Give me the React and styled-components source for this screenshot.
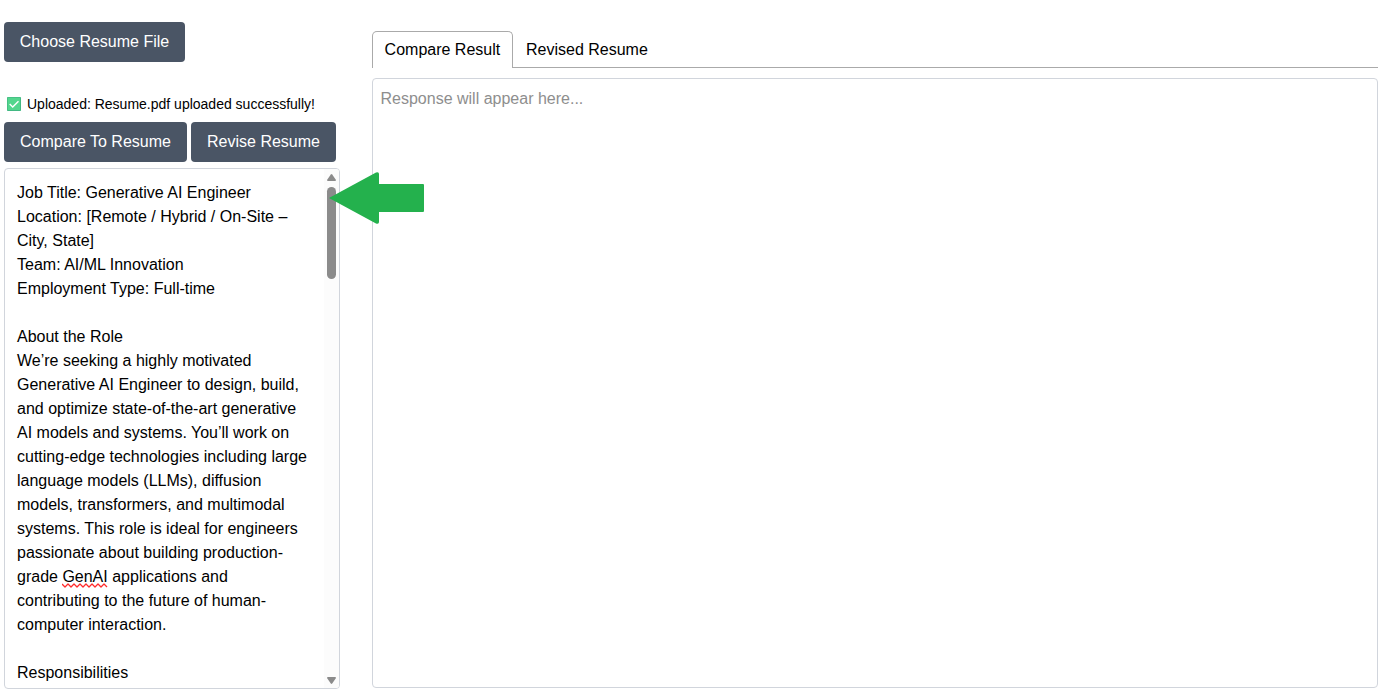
import React from 'react';
import styled, { createGlobalStyle } from 'styled-components';

const GlobalStyle = createGlobalStyle`
  *, *::before, *::after { box-sizing: border-box; }
  body {
    margin: 0;
    background: #fff;
    color: #000;
    font: 16px/24px "Liberation Sans", Arial, sans-serif;
    overflow: hidden;
  }
`;

const Page = styled.main`
  position: relative;
  display: flex;
  gap: 32px;
  height: 692px;
  padding: 0 8px 0 4px;
`;

const Sidebar = styled.section`
  display: flex;
  flex-direction: column;
  align-items: flex-start;
  width: 336px;
  flex: none;
  padding-top: 22px;
`;

const Button = styled.button`
  height: 40px;
  width: ${(p) => p.$width}px;
  padding: 0;
  border: 0;
  border-radius: 4px;
  background: #4a5565;
  color: #fff;
  font: inherit;
  white-space: nowrap;
`;

const Status = styled.p`
  display: flex;
  align-items: center;
  gap: 6px;
  height: 20px;
  margin: 32px 0 8px;
  padding-left: 3px;
  font-size: 14px;
  line-height: 20px;
  white-space: nowrap;
`;

const Actions = styled.div`
  display: flex;
  gap: 4px;
  margin-bottom: 6px;
`;

const Editor = styled.div`
  display: flex;
  width: 336px;
  height: 521px;
  border: 1px solid #d1d5dc;
  border-radius: 4px;
  overflow: hidden;
`;

const Description = styled.div`
  flex: 1;
  padding: 12px 0 0 12px;
  overflow: hidden;
`;

const Line = styled.div`
  display: flex;
  height: 24px;
  white-space: pre;
`;

const Misspelled = styled.span`
  position: relative;
  svg {
    position: absolute;
    left: 0;
    top: 18px;
  }
`;

const Scrollbar = styled.div`
  display: flex;
  flex-direction: column;
  align-items: center;
  width: 15px;
  padding: 5px 0 4px;
  background: #fcfcfc;
`;

const Thumb = styled.div`
  width: 9px;
  height: 92px;
  margin: 5px 0 auto;
  border-radius: 5px;
  background: #8b8b8b;
`;

const Results = styled.section`
  display: flex;
  flex-direction: column;
  flex: 1;
  padding-top: 31px;
`;

const TabList = styled.div`
  display: flex;
  height: 37px;
  margin-bottom: 10px;
`;

const Tab = styled.div`
  width: ${(p) => p.$width};
  padding: 6px 0 0 ${(p) => (p.$active ? 11.6 : 13)}px;
  white-space: nowrap;
  border: 1px solid ${(p) => (p.$active ? '#aaa' : 'transparent')};
  border-bottom-color: ${(p) => (p.$active ? 'transparent' : '#aaa')};
  border-left-width: ${(p) => (p.$active ? 1 : 0)}px;
  border-right-width: ${(p) => (p.$active ? 1 : 0)}px;
  ${(p) => p.$active && 'border-bottom-width: 0; border-radius: 5px 5px 0 0;'}
`;

const Response = styled.div`
  height: 610px;
  padding: 8px 8px 8px 7.5px;
  border: 1px solid #d1d5dc;
  border-radius: 4px;
  color: #8e8e8e;
`;

const Arrow = styled.svg`
  position: absolute;
  left: 329px;
  top: 172px;
`;

const lines = [
  'Job Title: Generative AI Engineer',
  'Location: [Remote / Hybrid / On-Site –',
  'City, State]',
  'Team: AI/ML Innovation',
  'Employment Type: Full-time',
  '',
  'About the Role',
  'We’re seeking a highly motivated',
  'Generative AI Engineer to design, build,',
  'and optimize state-of-the-art generative',
  'AI models and systems. You’ll work on',
  'cutting-edge technologies including large',
  'language models (LLMs), diffusion',
  'models, transformers, and multimodal',
  'systems. This role is ideal for engineers',
  'passionate about building production-',
  'grade GenAI applications and',
  'contributing to the future of human-',
  'computer interaction.',
  '',
  'Responsibilities',
];

const wave = 'M0 1 L3 4' + Array.from({ length: 7 }, (_, i) => ` L${i * 6 + 6} 1 L${i * 6 + 9} 4`).join('');

function CheckIcon() {
  return (
    <svg width="14" height="14" viewBox="0 0 14 14">
      <rect width="14" height="14" rx="0.7" fill="#42b883" />
      <rect x="0.7" y="0.7" width="12.3" height="12.3" fill="#53d68d" />
      <path d="M2.7 7.1 5.7 10 11.5 4.2" fill="none" stroke="#fff" strokeWidth="1.4" />
    </svg>
  );
}

function TextLine({ text }) {
  const [head, tail] = text.split('GenAI');
  if (tail === undefined) return <Line>{text}</Line>;
  return (
    <Line>
      <span>{head}</span>
      <Misspelled>
        GenAI
        <svg width="46" height="5" viewBox="0 0 46 5">
          <path d={wave} fill="none" stroke="#ff2b2b" strokeWidth="1.3" strokeLinejoin="round" />
        </svg>
      </Misspelled>
      <span>{tail}</span>
    </Line>
  );
}

export default function App() {
  return (
    <>
      <GlobalStyle />
      <Page>
        <Sidebar>
          <Button $width={181}>Choose Resume File</Button>
          <Status>
            <CheckIcon />
            <span>Uploaded: Resume.pdf uploaded successfully!</span>
          </Status>
          <Actions>
            <Button $width={183}>Compare To Resume</Button>
            <Button $width={145}>Revise Resume</Button>
          </Actions>
          <Editor>
            <Description>
              {lines.map((text, i) => (
                <TextLine key={i} text={text} />
              ))}
            </Description>
            <Scrollbar>
              <svg width="9" height="8" viewBox="0 0 9 8">
                <path d="M3.8 0.5Q4.5-.3 5.2.5L9 6Q9 7 8 7H1Q0 7 0 6Z" fill="#8b8b8b" />
              </svg>
              <Thumb />
              <svg width="9" height="8" viewBox="0 0 9 8">
                <path d="M3.8 7.5Q4.5 8.3 5.2 7.5L9 2Q9 1 8 1H1Q0 1 0 2Z" fill="#8b8b8b" />
              </svg>
            </Scrollbar>
          </Editor>
        </Sidebar>
        <Results>
          <TabList>
            <Tab $active $width="141px">Compare Result</Tab>
            <Tab $width="865px">Revised Resume</Tab>
          </TabList>
          <Response>Response will appear here...</Response>
        </Results>
        <Arrow width="95" height="52" viewBox="0 0 95 52">
          <path d="M0 26 47 .5Q50-.5 50 2V12H94Q95 12 95 13V39Q95 40 94 40H50V50Q50 52.5 47 51.5Z" fill="#24b14d" />
        </Arrow>
      </Page>
    </>
  );
}
